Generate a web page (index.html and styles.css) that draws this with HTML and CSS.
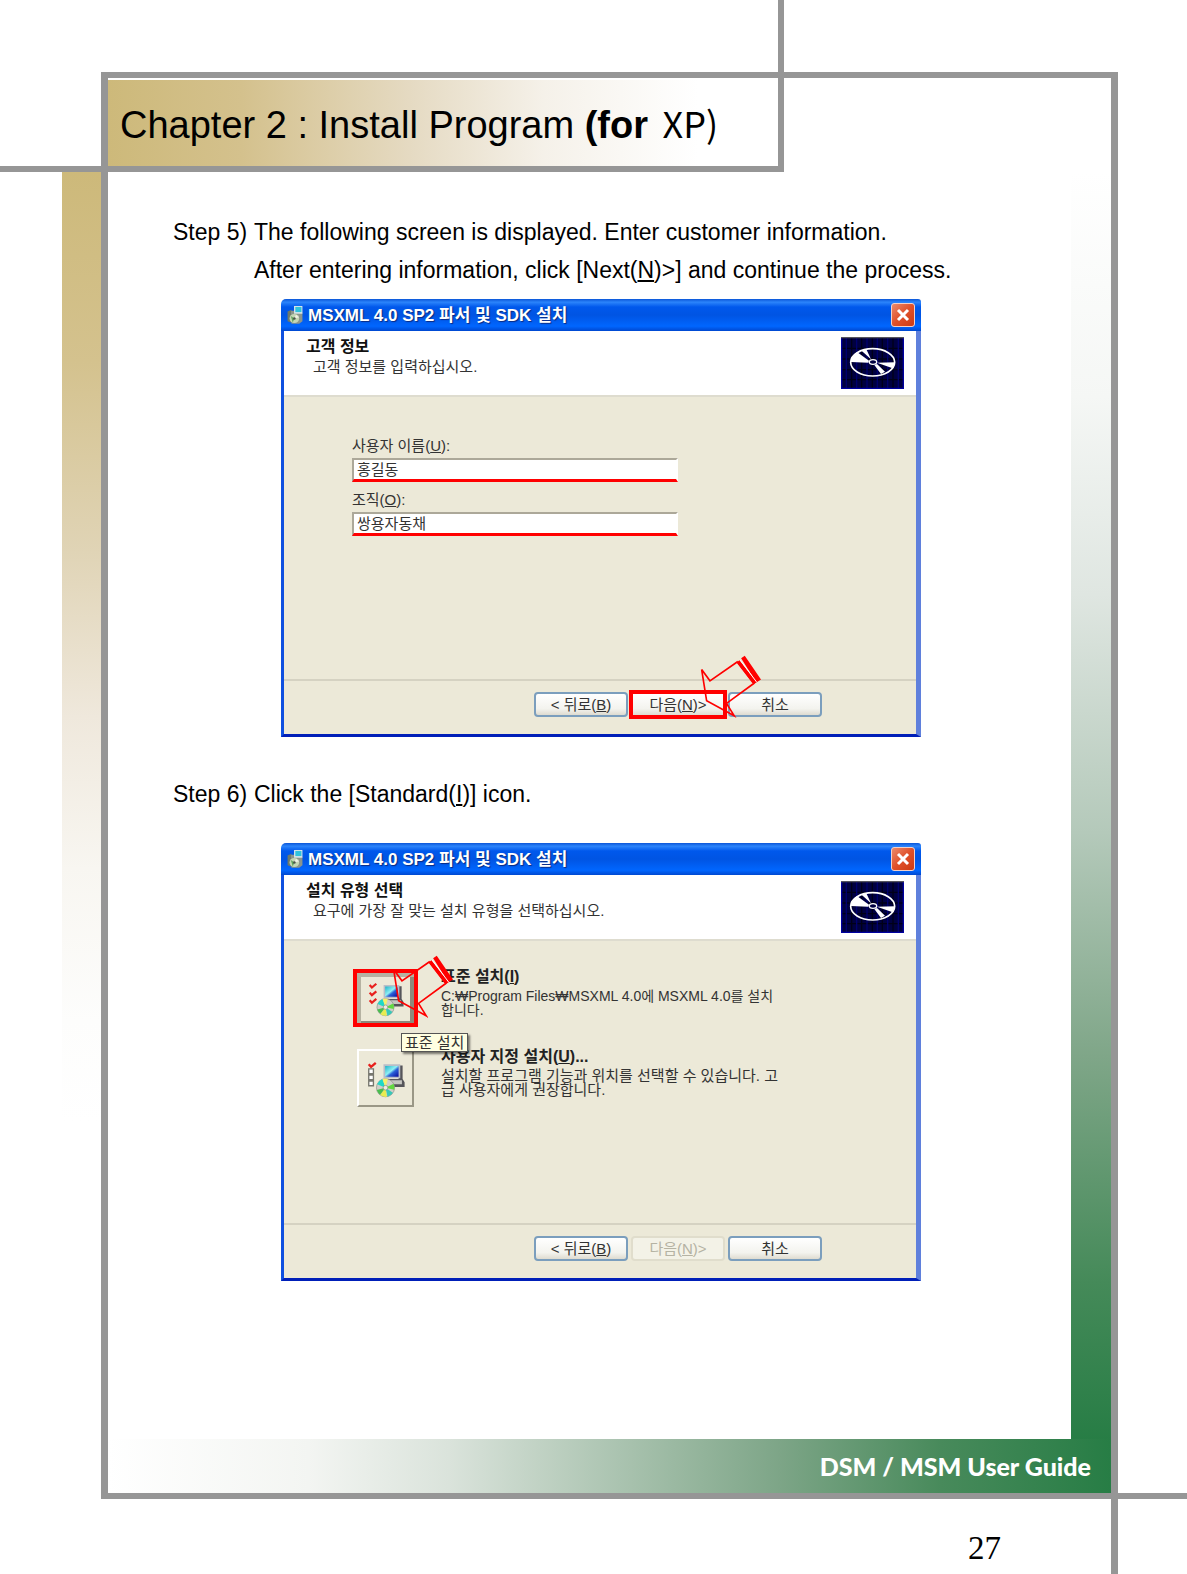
FILE: index.html
```html
<!DOCTYPE html>
<html lang="en">
<head>
    <meta charset="UTF-8">
    <meta name="viewport" content="width=device-width, initial-scale=1.0">
    <title>DSM / MSM User Guide - Install Program</title>
    <link rel="stylesheet" href="styles.css">
</head>
<body>
    <!-- Shared drawings -->
    <svg class="symbols" aria-hidden="true">
        <linearGradient id="screen" x1="0" y1="0" x2="1" y2="1">
            <stop offset="0" stop-color="#1fb4c8"/>
            <stop offset="0.45" stop-color="#8ff0f4"/>
            <stop offset="0.6" stop-color="#2a62d8"/>
            <stop offset="1" stop-color="#0a0a9c"/>
        </linearGradient>
        <symbol id="installer" viewBox="0 0 54 62">
            <path d="M4 20l12-5v40l-12-5z" fill="#6d7a6a"/>
            <path d="M14 18h28l8 6v26l-10 8H16z" fill="#8b958c"/>
            <path d="M24 3h26v24H24z" fill="#d9e6ea"/>
            <path d="M28 6h19v16H28z" fill="#2fc3dc"/>
            <ellipse cx="25" cy="42" rx="15" ry="14" fill="#c4d6b4"/>
            <path d="M14 34l11 8-5 12z" fill="#5fa55a"/>
            <path d="M30 30l10 8-15 4z" fill="#f2f2e6"/>
            <circle cx="25" cy="42" r="4" fill="#4a554b"/>
        </symbol>
        <symbol id="disc" viewBox="0 0 189 156">
            <path d="M0 0h189v156H0z" fill="#000040"/>
            <path d="M0 34h189M0 66h189M0 98h189M0 128h189M32 0v156M62 0v156M94 0v156M124 0v156M156 0v156" stroke="#000018" stroke-width="4"/>
            <path d="M16 0v156M47 0v156M78 0v156M109 0v156M140 0v156M172 0v156" stroke="#00006e" stroke-width="4"/>
            <path d="M2 0v154h185V0" fill="none" stroke="#0000a0" stroke-width="4"/>
            <path d="M0 2h189" stroke="#55555f" stroke-width="4"/>
            <ellipse cx="95" cy="76" rx="66" ry="41" fill="none" stroke="#fff" stroke-width="5"/>
            <path d="M30 65l18-20 36 26-2 6-52-2zM60 40l16-3 14 30zM108 77l54-1-7 18zM100 84l8-3 24 23-12 7z" fill="#fff"/>
            <ellipse cx="96" cy="75" rx="11" ry="7" fill="#000040" stroke="#fff" stroke-width="4"/>
        </symbol>
        <symbol id="computer" viewBox="0 0 170 172">
            <path d="M124 48h12v40h-12zM88 88h48l6 10v14h-50z" fill="#55555a"/>
            <path d="M92 92h42v12H92z" fill="#c5c5c0"/>
            <path d="M79 44h50v42H79z" fill="#b9bec8"/>
            <path d="M84 49h40v32H84z" fill="url(#screen)"/>
            <circle cx="85" cy="114" r="27" fill="#cfcfc8" stroke="#8a8a84" stroke-width="2"/>
            <path d="M85 114L60 104a27 27 0 0 1 16-16z" fill="#20d8c8"/>
            <path d="M85 114l-9-26a27 27 0 0 1 16 0z" fill="#f4f06a"/>
            <path d="M85 114l24-12a27 27 0 0 1 2 18z" fill="#62d840"/>
            <path d="M85 114l22 15a27 27 0 0 1-16 12z" fill="#38c8b8"/>
            <path d="M85 114l4 27a27 27 0 0 1-20-5z" fill="#e8ec50"/>
            <path d="M85 114l-16 21a27 27 0 0 1-10-14z" fill="#49bd4e"/>
            <circle cx="85" cy="114" r="7" fill="#ecebe0" stroke="#8a8a84" stroke-width="2"/>
        </symbol>
        <symbol id="arrow" viewBox="600 44 190 190">
            <path d="M712 65L630 122 605 88l15 94 83 45-23-37 82-60z" fill="none" stroke="#f00" stroke-width="5"/>
            <path d="M711 66l8-6 52 66-9 6zM724 54l11-8 49 72-14 9z" fill="#f00"/>
            <path d="M721 59l50 67" stroke="#fff" stroke-width="3"/>
        </symbol>
    </svg>

    <div class="page">
        <!-- Frame -->
        <div class="strip strip-tan"></div>
        <div class="strip strip-green"></div>
        <div class="line line-top"></div>
        <div class="line line-left"></div>
        <div class="line line-right"></div>
        <div class="line line-title-right"></div>
        <div class="line line-title-bottom"></div>
        <div class="line line-bottom"></div>

        <header class="chapter">
            <h1>Chapter 2 : Install Program <b>(for</b> <span class="os-name">XP)</span></h1>
        </header>

        <!-- Main Content -->
        <main class="content">
            <section class="step">
                <div class="step-text">
                    <span class="step-label">Step 5)</span>
                    <p>The following screen is displayed. Enter customer information.<br>After entering information, click [Next(<u>N</u>)&gt;] and continue the process.</p>
                </div>

                <div class="dialog">
                    <div class="title-bar">
                        <svg class="title-icon"><use href="#installer"/></svg>
                        <span class="title-text">MSXML 4.0 SP2 파서 및 SDK 설치</span>
                        <button class="close-btn" aria-label="Close"><svg viewBox="0 0 22 22"><path d="M6 6l10 10M16 6L6 16"/></svg></button>
                    </div>
                    <div class="dialog-inner">
                        <div class="banner">
                            <div>
                                <h2>고객 정보</h2>
                                <p>고객 정보를 입력하십시오.</p>
                            </div>
                            <svg class="disc"><use href="#disc"/></svg>
                        </div>
                        <form class="dialog-body customer-form">
                            <label for="userName">사용자 이름(<u>U</u>):</label>
                            <input type="text" id="userName" value="홍길동">
                            <label for="company">조직(<u>O</u>):</label>
                            <input type="text" id="company" value="쌍용자동채">
                        </form>
                        <div class="dialog-footer">
                            <button class="btn">&lt; 뒤로(<u>B</u>)</button>
                            <button class="btn btn-marked">다음(<u>N</u>)&gt;</button>
                            <button class="btn">취소</button>
                        </div>
                    </div>
                    <svg class="arrow arrow-next"><use href="#arrow"/></svg>
                </div>
            </section>

            <section class="step step-spaced">
                <div class="step-text">
                    <span class="step-label">Step 6)</span>
                    <p>Click the [Standard(<u>I</u>)] icon.</p>
                </div>

                <div class="dialog">
                    <div class="title-bar">
                        <svg class="title-icon"><use href="#installer"/></svg>
                        <span class="title-text">MSXML 4.0 SP2 파서 및 SDK 설치</span>
                        <button class="close-btn" aria-label="Close"><svg viewBox="0 0 22 22"><path d="M6 6l10 10M16 6L6 16"/></svg></button>
                    </div>
                    <div class="dialog-inner">
                        <div class="banner">
                            <div>
                                <h2>설치 유형 선택</h2>
                                <p>요구에 가장 잘 맞는 설치 유형을 선택하십시오.</p>
                            </div>
                            <svg class="disc"><use href="#disc"/></svg>
                        </div>
                        <div class="dialog-body options">
                            <div class="option">
                                <button class="option-btn option-marked" aria-label="표준 설치">
                                    <svg viewBox="6 6 158 158">
                                        <use href="#computer" width="170" height="172"/>
                                        <path d="M35 44l7 8 14-12M35 68l7 8 14-12M35 92l7 8 14-12" fill="none" stroke="#e8201c" stroke-width="7"/>
                                    </svg>
                                </button>
                                <div>
                                    <h3>표준 설치(<u>I</u>)</h3>
                                    <p class="install-path">C:₩Program Files₩MSXML 4.0에 MSXML 4.0를 설치<br>합니다.</p>
                                </div>
                                <span class="tooltip">표준 설치</span>
                            </div>
                            <div class="option">
                                <button class="option-btn" aria-label="사용자 지정 설치">
                                    <svg viewBox="6 6 158 158">
                                        <use href="#computer" width="170" height="172"/>
                                        <path d="M35 44l7 8 14-12" fill="none" stroke="#e8201c" stroke-width="7"/>
                                        <path d="M35 58h14v14H35zM35 76h14v14H35zM35 94h14v14H35z" fill="#fff" stroke="#77776f" stroke-width="4"/>
                                    </svg>
                                </button>
                                <div>
                                    <h3>사용자 지정 설치(<u>U</u>)...</h3>
                                    <p>설치할 프로그램 기능과 위치를 선택할 수 있습니다. 고<br>급 사용자에게 권장합니다.</p>
                                </div>
                            </div>
                        </div>
                        <div class="dialog-footer">
                            <button class="btn">&lt; 뒤로(<u>B</u>)</button>
                            <button class="btn" disabled>다음(<u>N</u>)&gt;</button>
                            <button class="btn">취소</button>
                        </div>
                    </div>
                    <svg class="arrow arrow-standard"><use href="#arrow"/></svg>
                </div>
            </section>
        </main>

        <footer class="guide-name">DSM / MSM User Guide</footer>
        <div class="page-number">27</div>
    </div>
</body>
</html>
```
FILE: styles.css
```css
:root {
    --line: #969696;
    --tan: #cdb97a;
    --green: #277d45;
    --face: #ece9d8;
    --marker: #ff0000;
}

* {
    margin: 0;
    padding: 0;
    box-sizing: border-box;
}

body {
    background: #fff;
    color: #000;
    font-family: 'Liberation Sans', Arial, sans-serif;
}

.symbols {
    position: absolute;
    width: 0;
    height: 0;
}

/* Page frame */
.page {
    display: grid;
    min-height: 100vh;
    grid-template-columns: 62px 39px 7px minmax(0, 670px) 6px 1fr 40px 7px 69px;
    grid-template-rows: 72px 6px 2px 86px 6px 1fr 54px 6px 75px;
}

.line {
    background: var(--line);
}

.line-top {
    grid-area: 2 / 3 / 3 / 9;
}

.line-left {
    grid-area: 2 / 3 / 9 / 4;
}

.line-right {
    grid-area: 2 / 8 / 10 / 9;
}

.line-title-right {
    grid-area: 1 / 5 / 6 / 6;
}

.line-title-bottom {
    grid-area: 5 / 1 / 6 / 6;
}

.line-bottom {
    grid-area: 8 / 3 / 9 / 10;
}

.strip-tan {
    grid-area: 6 / 2 / 7 / 3;
    background: linear-gradient(to bottom, var(--tan), #d4c28e 15%, #e0d4b6 30%, #efe8dc 43%, #f8f6f1 55%, #fdfdfc 67%, #fff 75%);
}

.strip-green {
    grid-area: 6 / 7 / 8 / 8;
    background: linear-gradient(to bottom, #fff, #f5f7f5 17%, #dfe6e1 32%, #b4c9ba 50%, #7fa688 67%, #458a59 84%, var(--green) 96%);
}

/* Chapter title */
.chapter {
    grid-area: 4 / 4 / 5 / 5;
    display: flex;
    align-items: center;
    padding-left: 12px;
    background: linear-gradient(to right, var(--tan), #d4c18d 20%, #e5dac2 45%, #f5f1e9 65%, #fff 88%);
}

.chapter h1 {
    font-size: 38px;
    font-weight: 400;
    line-height: 44px;
    white-space: nowrap;
}

.os-name {
    font-family: 'Noto Sans CJK KR', sans-serif;
    font-size: 36px;
    font-weight: 400;
    line-height: 44px;
    margin-left: 4px;
}

/* Main Content */
.content {
    grid-area: 6 / 4 / 7 / 7;
    padding: 41px 20px 40px 65px;
}

.step-spaced {
    margin-top: 38px;
}

.step-text {
    display: flex;
    font-size: 23px;
    line-height: 38px;
}

.step-label {
    flex: 0 0 81px;
}

.step u {
    text-decoration-thickness: 2px;
    text-underline-offset: 2px;
}

/* Setup dialogs */
.dialog {
    position: relative;
    display: flex;
    flex-direction: column;
    max-width: 640px;
    min-height: 438px;
    margin: 10px 0 0 108px;
    font-family: 'Liberation Sans', 'Noto Sans CJK KR', sans-serif;
    font-size: 15px;
    color: #333;
}

.step-spaced .dialog {
    margin-top: 30px;
}

.dialog u {
    text-decoration-thickness: 1px;
    text-underline-offset: 1px;
}

.title-bar {
    display: flex;
    align-items: center;
    height: 32px;
    padding: 0 7px 0 5px;
    background: linear-gradient(to bottom, #0b56d8, #2b84fb 10%, #0058ec 25%, #0054e3 50%, #0066ff 85%, #0048d0);
    border-radius: 5px 3px 0 0;
}

.title-icon {
    width: 18px;
    height: 20px;
    margin-right: 4px;
}

.title-text {
    flex: 1;
    padding-top: 2px;
    color: #fff;
    font-size: 17px;
    font-weight: 700;
    line-height: 24px;
    text-shadow: 1px 1px 1px #0a2a80;
}

.close-btn {
    width: 24px;
    height: 24px;
    margin-right: -1px;
    border: 1px solid #f4d0c8;
    border-radius: 3px;
    background: linear-gradient(135deg, #ec8b6c, #e0502a 50%, #cc3a12);
}

.close-btn svg {
    display: block;
    width: 22px;
    height: 22px;
    fill: none;
    stroke: #fff;
    stroke-width: 3;
}

.dialog-inner {
    flex: 1;
    display: flex;
    flex-direction: column;
    background: var(--face);
    border-left: 3px solid #0f50e0;
    border-right: 5px solid #5f80dc;
    border-bottom: 3px solid #001fb8;
}

.banner {
    display: flex;
    justify-content: space-between;
    height: 66px;
    padding: 6px 12px 0 22px;
    background: #fff;
    border-bottom: 2px solid #dedccf;
}

.banner h2 {
    font-size: 16px;
    line-height: 20px;
    color: #111;
}

.banner p {
    padding-left: 7px;
    line-height: 20px;
}

.disc {
    width: 63px;
    height: 52px;
}

.dialog-body {
    flex: 1;
}

.dialog-footer {
    display: flex;
    justify-content: flex-end;
    gap: 3px;
    height: 55px;
    padding: 11px 94px 0 0;
    border-top: 2px solid #d5d2c2;
}

.btn {
    width: 94px;
    height: 25px;
    border: 2px solid #7b9ebd;
    border-radius: 4px;
    background: linear-gradient(to bottom, #fff, #f3f3ee 70%, #dedbd0);
    color: #333;
    font: inherit;
    line-height: 20px;
}

.btn-marked {
    border-color: #8cb0ee;
    outline: 4px solid var(--marker);
    outline-offset: -2px;
    border-radius: 0;
}

.btn:disabled {
    border-color: #e0ddcc;
    background: #f3f2e7;
    color: #b5b3a3;
}

/* Customer information */
.customer-form {
    display: flex;
    flex-direction: column;
    align-items: flex-start;
    padding: 39px 68px 0;
}

.customer-form label {
    line-height: 20px;
    margin-bottom: 2px;
}

.customer-form input {
    width: 100%;
    max-width: 326px;
    height: 24px;
    margin-bottom: 8px;
    padding: 0 3px 3px;
    border: 2px solid #fff;
    border-top-color: #aca899;
    border-left-color: #aca899;
    border-bottom: 3px solid var(--marker);
    background: #fff;
    color: #333;
    font: inherit;
    line-height: 16px;
}

/* Setup type */
.options {
    display: flex;
    flex-direction: column;
    gap: 22px;
    padding: 28px 0 0 69px;
}

.option {
    position: relative;
    display: grid;
    grid-template-columns: 65px 1fr;
    column-gap: 23px;
    align-items: start;
}

.option h3 {
    margin-bottom: 4px;
    font-size: 16px;
    line-height: 16px;
    color: #222;
}

.option p {
    line-height: 14px;
}

.option .install-path {
    font-size: 14px;
}

.option-btn {
    justify-self: center;
    width: 57px;
    height: 58px;
    border: 2px solid;
    border-color: #fff #9a9786 #9a9786 #fff;
    background: var(--face);
}

.option-btn svg {
    display: block;
    width: 53px;
    height: 54px;
}

.option-marked {
    width: 65px;
    border: 4px solid var(--marker);
    box-shadow: inset 4px 4px 0 #b5b2a2, inset -4px -2px 0 #8d8a7c;
}

.option-marked svg {
    width: 57px;
    height: 50px;
}

.tooltip {
    position: absolute;
    left: 48px;
    top: 64px;
    z-index: 1;
    padding: 0 3px;
    border: 1px solid #555;
    background: #ffffe1;
    box-shadow: 2px 2px 2px rgba(0, 0, 0, 0.5);
    line-height: 17px;
}

/* Red pointer arrows */
.arrow {
    position: absolute;
    width: 63px;
    height: 63px;
    z-index: 2;
}

.arrow-next {
    left: 419px;
    top: 356px;
}

.arrow-standard {
    left: 111px;
    top: 112px;
}

/* Footer */
.guide-name {
    grid-area: 7 / 4 / 8 / 8;
    padding-right: 20px;
    background: linear-gradient(to right, #fff, #f3f5f2 20%, #dae3db 34%, #7da587 67%, #488a5b 83%, var(--green));
    color: #fff;
    font-family: Lato, sans-serif;
    font-size: 25px;
    font-weight: 900;
    line-height: 54px;
    text-align: right;
}

.page-number {
    grid-area: 9 / 6 / 10 / 8;
    padding: 30px 110px 0 0;
    font-family: 'Liberation Serif', serif;
    font-size: 33px;
    line-height: 38px;
    text-align: right;
}
```
